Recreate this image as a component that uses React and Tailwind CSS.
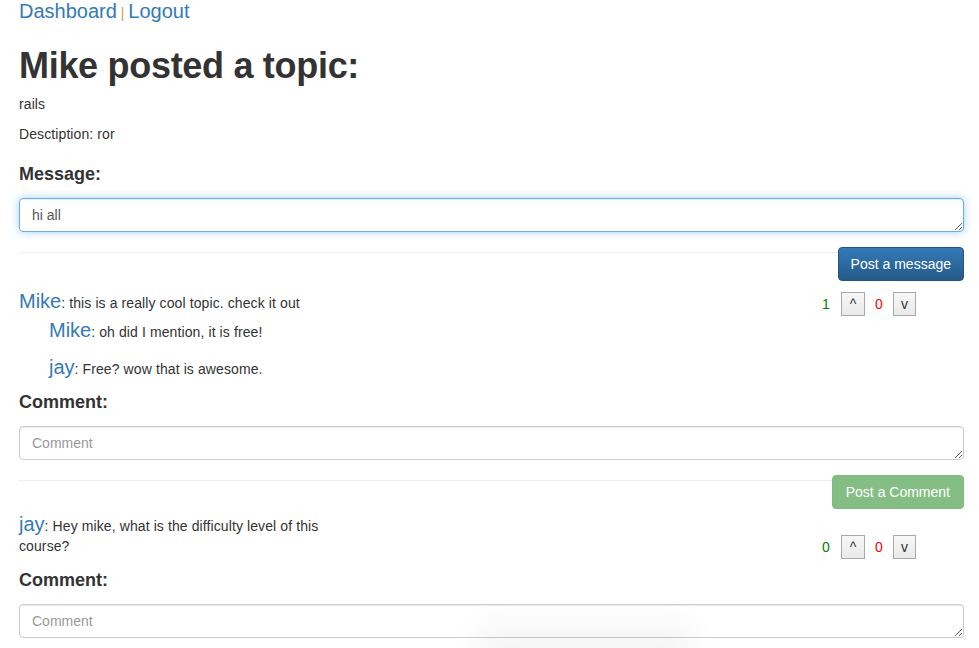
const replies = [
  { author: "Mike", body: "oh did I mention, it is free!" },
  { author: "jay", body: "Free? wow that is awesome." },
];

const VoteBox = ({ up, down }) => (
  <div className="ml-auto mr-[48px] mb-[-3px] flex items-center shrink-0">
    <span className="w-[8px] text-[#008000]">{up}</span>
    <button className="ml-[11px] w-[24px] h-[24px] border border-[#a9a9a9] bg-gradient-to-b from-[#f8f8f8] to-[#e9e9e9] text-[#333] text-[14px] font-normal leading-none">
      ^
    </button>
    <span className="ml-[10px] w-[8px] text-[#ff0000]">{down}</span>
    <button className="ml-[10px] w-[23px] h-[24px] border border-[#a9a9a9] bg-gradient-to-b from-[#f8f8f8] to-[#e9e9e9] text-[#333] text-[14px] font-normal leading-none">
      v
    </button>
  </div>
);

const Line = ({ author, body, className = "" }) => (
  <div className={`tracking-[0.1px] ${className}`}>
    <a className="text-[20px] leading-[22px] tracking-normal text-[#337ab7]">{author}</a>
    : {body}
  </div>
);

const CommentForm = ({ labelGap = "mt-[13px]" }) => (
  <>
    <h4 className={`${labelGap} text-[18px] leading-[20px] font-bold`}>Comment:</h4>
    <textarea
      rows={1}
      placeholder="Comment"
      className="mt-[14px] block w-full h-[34px] px-[12px] py-[6px] text-[14px] leading-[20px] text-[#555] placeholder:text-[#999] border border-[#ccc] rounded-[4px] shadow-[inset_0_1px_1px_rgba(0,0,0,0.075)] outline-none"
    />
  </>
);

export default function App() {
  return (
    <div className="relative h-[648px] overflow-hidden bg-white pl-[19px] pr-[15px] font-['Liberation_Sans',Arial,sans-serif] text-[14px] leading-[20px] text-[#333]">
      {/* top links */}
      <nav className="h-[22px] text-[20px] leading-[22px] text-[#337ab7]">
        <a>Dashboard</a>
        <span className="text-[14px] text-[#d09a4a]"> | </span>
        <a>Logout</a>
      </nav>

      <h1 className="mt-[24px] text-[36px] leading-[40px] font-bold tracking-[-0.3px]">Mike posted a topic:</h1>
      <p className="mt-[8px] tracking-[0.1px]">rails</p>
      <p className="mt-[10px] tracking-[0.1px]">Desctiption: ror</p>

      <h4 className="mt-[20px] text-[18px] leading-[20px] font-bold">Message:</h4>
      <textarea
        rows={1}
        defaultValue="hi all"
        className="mt-[14px] block w-full h-[34px] px-[12px] py-[6px] text-[14px] leading-[20px] text-[#555] border border-[#66afe9] rounded-[4px] shadow-[inset_0_1px_1px_rgba(0,0,0,0.075),0_0_8px_rgba(102,175,233,0.6)] outline-none"
      />

      <div className="mt-[15px] flex items-start">
        <div className="flex-1 mt-[5px] border-t border-[#eee]" />
        <button className="h-[34px] px-[12px] rounded-[4px] border border-[#245580] bg-gradient-to-b from-[#337ab7] to-[#265a88] text-white text-[14px]">
          Post a message
        </button>
      </div>

      {/* first message with replies */}
      <div className="mt-[9px] flex items-end">
        <Line className="w-[325px]" author="Mike" body="this is a really cool topic. check it out" />
        <VoteBox up="1" down="0" />
      </div>
      <div className="ml-[30px]">
        <Line className="mt-[6px]" {...replies[0]} />
        <Line className="mt-[14px]" {...replies[1]} />
      </div>
      <CommentForm />

      <div className="mt-[15px] flex items-start">
        <div className="flex-1 mt-[5px] border-t border-[#eee]" />
        <button className="h-[34px] px-[13px] rounded-[4px] border border-[#7fbb7f] bg-[#85be85] text-white text-[14px]">
          Post a Comment
        </button>
      </div>

      {/* second message */}
      <div className="mt-[4px] flex items-end">
        <Line className="w-[325px]" author="jay" body="Hey mike, what is the difficulty level of this course?" />
        <VoteBox up="0" down="0" />
      </div>
      <CommentForm labelGap="mt-[14px]" />

      {/* faint window shadow at the bottom edge */}
      <div className="pointer-events-none absolute left-[475px] top-[620px] w-[220px] h-[55px] rounded-full bg-black/[0.035] blur-[14px]" />
    </div>
  );
}
